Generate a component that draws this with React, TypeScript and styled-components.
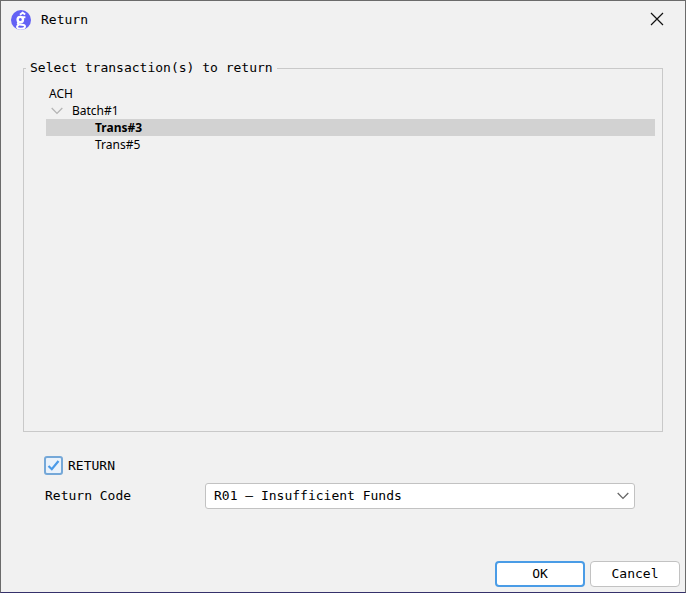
import React, { useState } from "react";
import styled, { createGlobalStyle } from "styled-components";

const MONO = '"DejaVu Sans Mono", "Liberation Mono", monospace';
const SANS = '"Noto Sans", "Open Sans", sans-serif';

const GlobalStyle = createGlobalStyle`
  * { box-sizing: border-box; }
  body { margin: 0; background: #f1f1f1; }
  button, select, input { font: inherit; color: inherit; margin: 0; }
`;

const Dialog = styled.form`
  display: flex;
  flex-direction: column;
  min-height: 100vh;
  border: 1px solid #6b6b6b;
  border-bottom-color: #35316b;
  background: #f1f1f1;
  color: #000;
  font: 13px/18px ${MONO};
`;

const TitleBar = styled.header`
  display: flex;
  align-items: center;
  gap: 10px;
  height: 38px;
  padding: 0 20px 0 10px;
`;

const Title = styled.h1`
  flex: 1;
  margin: 0;
  font: inherit;
`;

const CloseButton = styled.button`
  display: flex;
  padding: 0 1px 2px;
  border: 0;
  background: none;
`;

const Group = styled.fieldset`
  flex: 1;
  min-width: 0;
  margin: 20px 22px 24px;
  padding: 8px 7px 0 22px;
  border: 1px solid #c9c9c9;
`;

const GroupTitle = styled.legend`
  margin-left: -20px;
  padding: 0 4px;
`;

const Tree = styled.ul`
  margin: 0;
  padding: 0;
  list-style: none;
  font: 12px/17px ${SANS};
`;

const TreeRow = styled.li<{ $level: number; $selected?: boolean }>`
  display: flex;
  align-items: center;
  gap: 9px;
  height: 17px;
  padding-left: ${(p) => [3, 5, 49][p.$level]}px;
  background: ${(p) => (p.$selected ? "#d2d2d2" : "transparent")};
  font-weight: ${(p) => (p.$selected ? 700 : 400)};
`;

const Options = styled.div`
  display: grid;
  grid-template-columns: 160px 1fr;
  align-items: center;
  row-gap: 8px;
  padding: 0 50px 0 44px;
`;

const CheckLabel = styled.label`
  grid-column: 1 / -1;
  display: flex;
  align-items: center;
  gap: 5px;
  margin-left: -1px;
`;

const CheckWrap = styled.span`
  display: grid;
  width: 19px;
  height: 19px;

  > * { grid-area: 1 / 1; }
  svg { place-self: center; pointer-events: none; }
  input:not(:checked) + svg { visibility: hidden; }
`;

const CheckBox = styled.input`
  appearance: none;
  border: 2px solid #75a8d8;
  border-radius: 3px;
  background: #eaf2fb;
`;

const SelectWrap = styled.div`
  display: grid;
  align-items: center;

  > * { grid-area: 1 / 1; }
  svg { justify-self: end; margin-right: 6px; pointer-events: none; }
`;

const Select = styled.select`
  appearance: none;
  width: 100%;
  height: 26px;
  padding: 0 28px 0 8px;
  border: 1px solid #c2c2c2;
  border-radius: 3px;
  background: #fff;
`;

const Actions = styled.footer`
  display: flex;
  justify-content: flex-end;
  gap: 5px;
  padding: 52px 5px 5px;
`;

const Button = styled.button<{ $primary?: boolean }>`
  width: 90px;
  height: 26px;
  padding: 0;
  border: ${(p) => (p.$primary ? "2px solid #4a9ce6" : "1px solid #c2c2c2")};
  border-radius: 4px;
  background: #fff;
`;

function Logo() {
  return (
    <svg width="20" height="20" viewBox="0 0 20 20" aria-hidden="true">
      <circle cx="10" cy="10" r="10" fill="#6361f5" />
      <g fill="none" stroke="#fff">
        <circle cx="9.3" cy="9.6" r="2.7" strokeWidth="2.4" />
        <path
          d="M11.2 7.2h3.2M8 12.4c-2 .6-1.6 2.2.6 2.2 3.8 0 5.6.2 5.4 2-.2 1.8-2.2 2.2-4.8 2.1-3.8-.2-4.2-2.4-1.6-3.8"
          strokeWidth="2"
        />
        <path d="M9 4.8 11.6 2.7 14.2 4.6" strokeWidth="1.9" />
      </g>
    </svg>
  );
}

function Chevron({ color }: { color: string }) {
  return (
    <svg width="12" height="8" viewBox="0 0 12 8" fill="none" stroke={color} strokeWidth="1.3" aria-hidden="true">
      <path d="M.7 1 6 6.4 11.3 1" />
    </svg>
  );
}

export default function App() {
  const [checked, setChecked] = useState(true);
  return (
    <>
      <GlobalStyle />
      <Dialog onSubmit={(e) => e.preventDefault()}>
        <TitleBar>
          <Logo />
          <Title>Return</Title>
          <CloseButton type="button" aria-label="Close">
            <svg width="14" height="14" viewBox="0 0 14 14" stroke="#111" strokeWidth="1.2" aria-hidden="true">
              <path d="M1 1 13 13M13 1 1 13" />
            </svg>
          </CloseButton>
        </TitleBar>
        <Group>
          <GroupTitle>Select transaction(s) to return</GroupTitle>
          <Tree role="tree">
            <TreeRow role="treeitem" $level={0}>ACH</TreeRow>
            <TreeRow role="treeitem" aria-expanded="true" $level={1}>
              <Chevron color="#b4b4b4" />
              Batch#1
            </TreeRow>
            <TreeRow role="treeitem" aria-selected="true" $level={2} $selected>Trans#3</TreeRow>
            <TreeRow role="treeitem" $level={2}>Trans#5</TreeRow>
          </Tree>
        </Group>
        <Options>
          <CheckLabel>
            <CheckWrap>
              <CheckBox type="checkbox" checked={checked} onChange={(e) => setChecked(e.target.checked)} />
              <svg width="13" height="13" viewBox="0 0 13 13" fill="none" stroke="#4a9ae8" strokeWidth="2.2" aria-hidden="true">
                <path d="M1.5 7 4.8 10.2 11.5 2" />
              </svg>
            </CheckWrap>
            RETURN
          </CheckLabel>
          <label htmlFor="code">Return Code</label>
          <SelectWrap>
            <Select id="code" defaultValue="R01">
              <option value="R01">R01 – Insufficient Funds</option>
            </Select>
            <Chevron color="#666" />
          </SelectWrap>
        </Options>
        <Actions>
          <Button type="submit" $primary>OK</Button>
          <Button type="button">Cancel</Button>
        </Actions>
      </Dialog>
    </>
  );
}
